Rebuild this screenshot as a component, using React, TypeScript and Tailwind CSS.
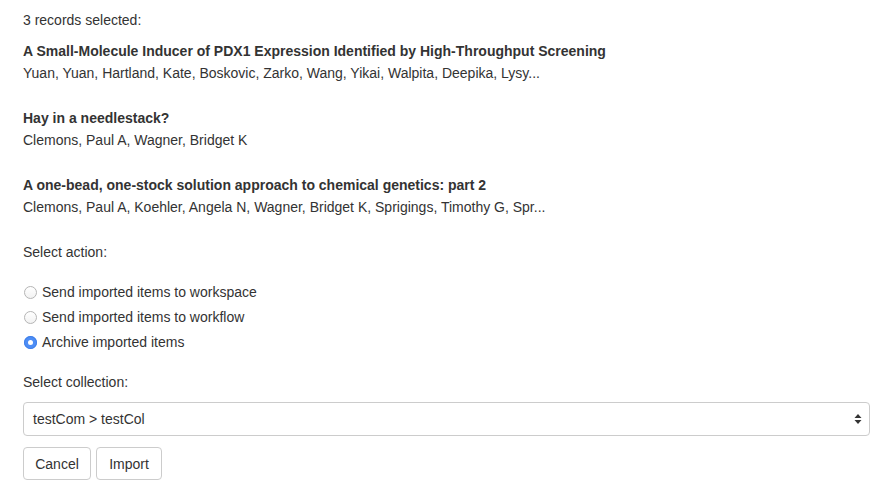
const records = [
  {
    title: 'A Small-Molecule Inducer of PDX1 Expression Identified by High-Throughput Screening',
    authors: 'Yuan, Yuan, Hartland, Kate, Boskovic, Zarko, Wang, Yikai, Walpita, Deepika, Lysy...',
  },
  {
    title: 'Hay in a needlestack?',
    authors: 'Clemons, Paul A, Wagner, Bridget K',
  },
  {
    title: 'A one-bead, one-stock solution approach to chemical genetics: part 2',
    authors: 'Clemons, Paul A, Koehler, Angela N, Wagner, Bridget K, Sprigings, Timothy G, Spr...',
  },
]

const actions = [
  { label: 'Send imported items to workspace', checked: false },
  { label: 'Send imported items to workflow', checked: false },
  { label: 'Archive imported items', checked: true },
]

const Radio = ({ checked }: { checked: boolean }) =>
  checked ? (
    <span className="ml-[1px] flex h-[13px] w-[13px] items-center justify-center rounded-full bg-[#4d8df5] shadow-[inset_0_0_0_1px_#3f7fe8]">
      <span className="h-[5px] w-[5px] rounded-full bg-white" />
    </span>
  ) : (
    <span className="ml-[1px] h-[13px] w-[13px] rounded-full border border-[#b5b5b5] bg-gradient-to-b from-white to-[#f2f2f2]" />
  )

const App = () => {
  return (
    <main className="min-h-screen bg-white px-[23px] pt-[9px] font-['Liberation_Sans',Arial,sans-serif] text-[14px] leading-[22px] text-[#333]">
      <p>3 records selected:</p>

      <div className="mt-[9px] flex flex-col gap-[23px]">
        {records.map((r) => (
          <div key={r.title}>
            <p className="font-bold">{r.title}</p>
            <p>{r.authors}</p>
          </div>
        ))}
      </div>

      <p className="mt-[23px]">Select action:</p>

      <div className="mt-[18px] flex flex-col gap-[3px]">
        {actions.map((a) => (
          <label key={a.label} className="flex items-center gap-[5px]">
            <Radio checked={a.checked} />
            <span>{a.label}</span>
          </label>
        ))}
      </div>

      <p className="mt-[18px]">Select collection:</p>

      <div className="mt-[9px] flex h-[34px] w-[847px] items-center justify-between rounded-[4px] border border-[#cccccc] bg-white pl-[9px] pr-[7px]">
        <span>testCom &gt; testCol</span>
        <svg width="8" height="12" viewBox="0 0 8 12" aria-hidden="true">
          <path d="M4 1 L7.5 5 L0.5 5 Z" fill="#333" />
          <path d="M4 11 L7.5 7 L0.5 7 Z" fill="#333" />
        </svg>
      </div>

      <div className="mt-[11px] flex gap-[5px]">
        <button
          type="button"
          className="h-[33px] w-[68px] rounded-[4px] border border-[#cccccc] bg-white text-[#333]"
        >
          Cancel
        </button>
        <button
          type="button"
          className="h-[33px] w-[66px] rounded-[4px] border border-[#cccccc] bg-white text-[#333]"
        >
          Import
        </button>
      </div>
    </main>
  )
}

export default App
